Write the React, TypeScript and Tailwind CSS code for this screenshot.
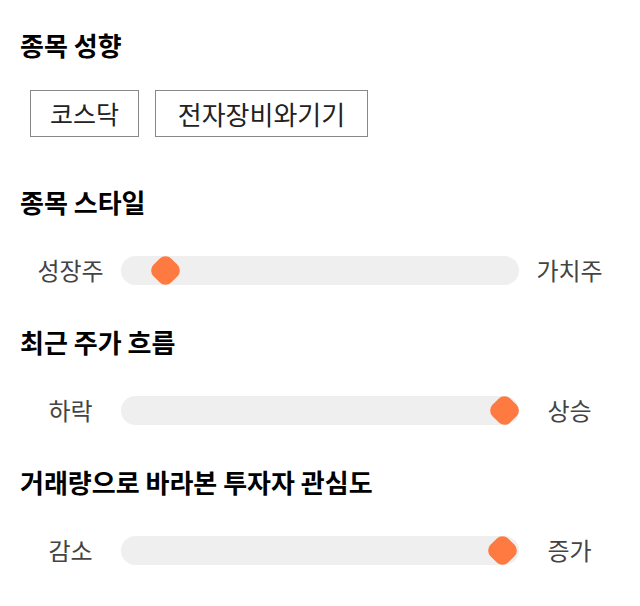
const font = { fontFamily: '"Noto Sans CJK KR", "Noto Sans", sans-serif' }

interface SliderRow {
  title: string
  left: string
  right: string
  thumbClass: string
}

const sliders: SliderRow[] = [
  { title: '종목 스타일', left: '성장주', right: '가치주', thumbClass: 'left-[30px]' },
  { title: '최근 주가 흐름', left: '하락', right: '상승', thumbClass: 'left-[369px]' },
  { title: '거래량으로 바라본 투자자 관심도', left: '감소', right: '증가', thumbClass: 'left-[367px]' },
]

function Slider({ row }: { row: SliderRow }) {
  return (
    <div className="grid grid-cols-[101px_398px_101px] items-center h-[30px]">
      <span className="text-center text-[24px] leading-[30px] text-[#444]">{row.left}</span>
      <div className="relative h-[29px] rounded-full bg-[#efefef]">
        <div className={`absolute top-0 w-[29px] h-[29px] flex items-center justify-center ${row.thumbClass}`}>
          <div className="w-[25px] h-[25px] rotate-45 rounded-[8px] bg-[#ff7a40]" />
        </div>
      </div>
      <span className="text-center text-[24px] leading-[30px] text-[#444]">{row.right}</span>
    </div>
  )
}

export default function App() {
  return (
    <div className="w-[640px] h-[606px] bg-white px-5 pt-[29px] text-black" style={font}>
      <h2 className="text-[26px] font-bold leading-[32px]">종목 성향</h2>
      <div className="flex gap-4 mt-[29px] ml-[10px]">
        <span className="border border-[#888] w-[109px] h-[47px] flex items-center justify-center text-[25px] text-[#222]">코스닥</span>
        <span className="border border-[#888] w-[213px] h-[47px] flex items-center justify-center text-[26px] text-[#222]">전자장비와기기</span>
      </div>

      {sliders.map((row, i) => (
        <div key={row.title} className={i === 0 ? 'mt-[49px]' : 'mt-[41px]'}>
          <h2 className="text-[26px] font-bold leading-[32px]">{row.title}</h2>
          <div className="mt-[37px]">
            <Slider row={row} />
          </div>
        </div>
      ))}
    </div>
  )
}
